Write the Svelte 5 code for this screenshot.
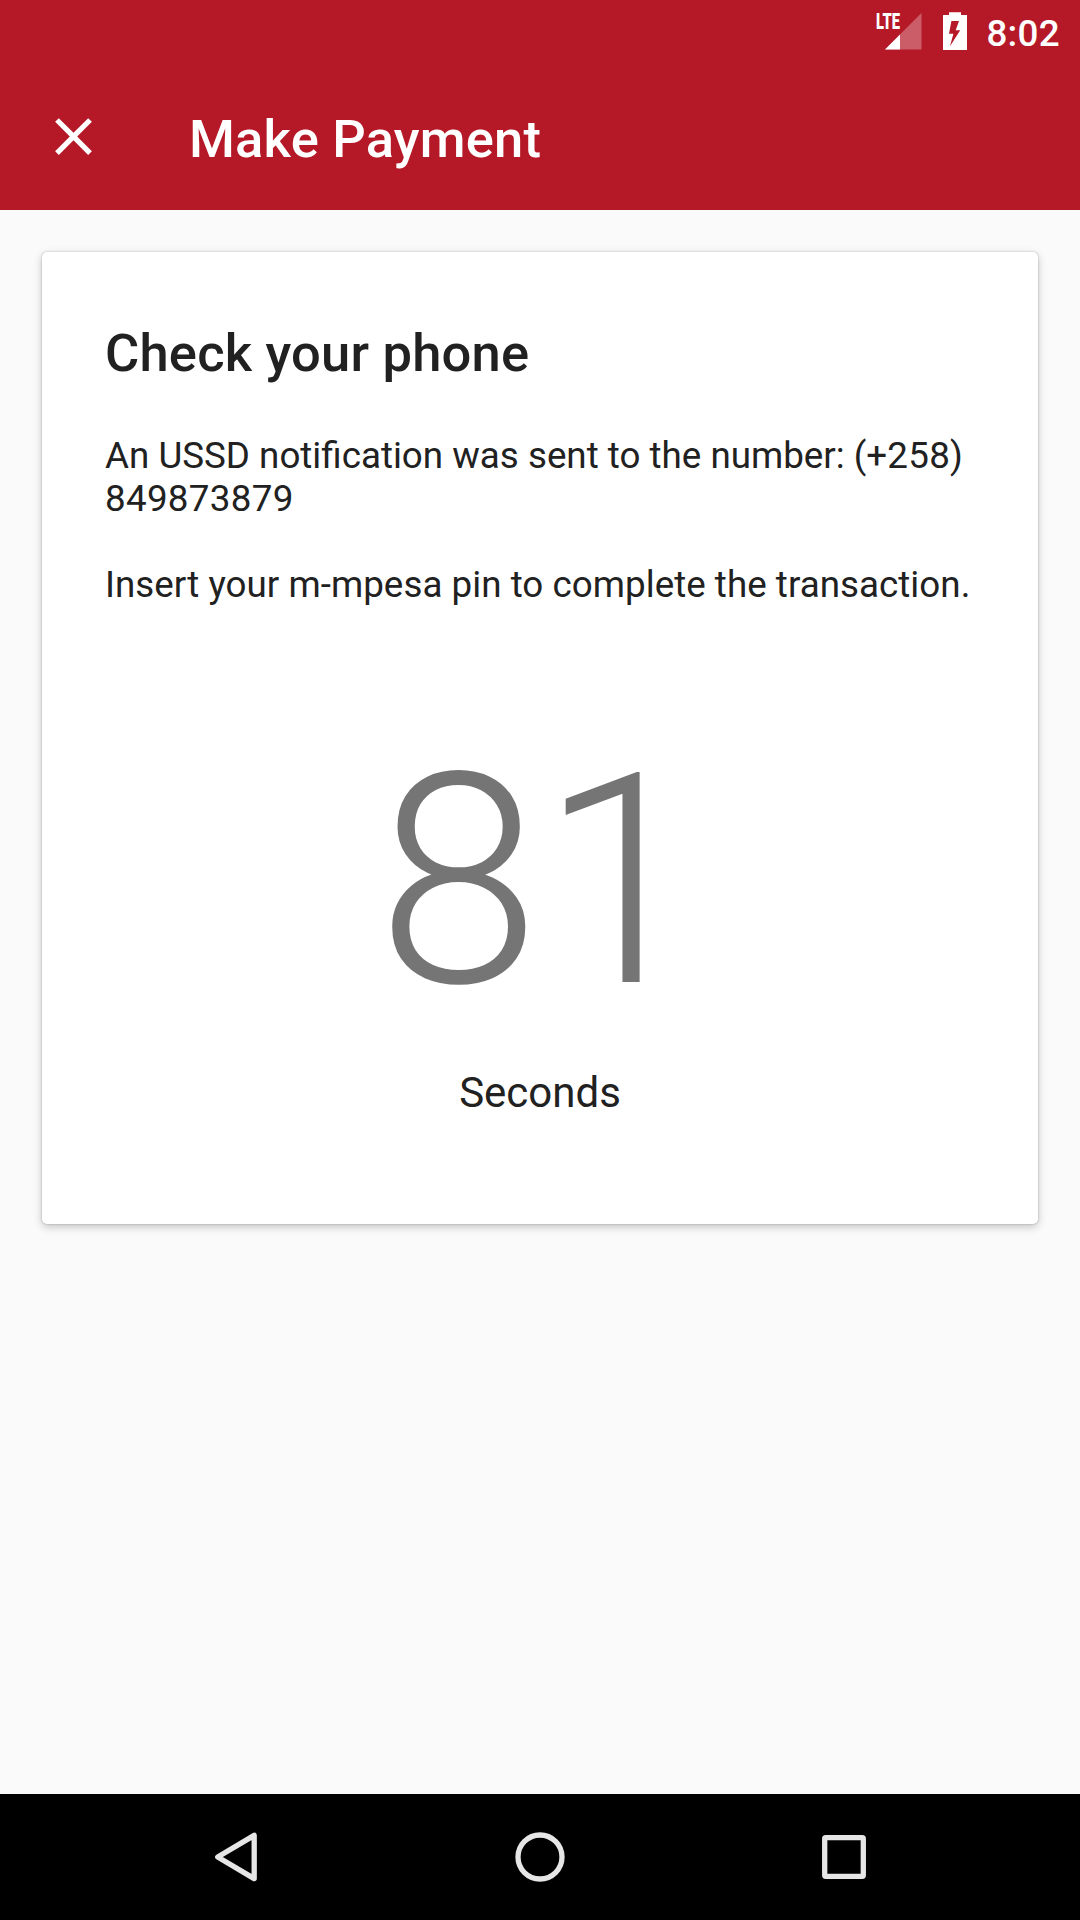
<script>
  const areaCode = '258';
  const phone = '849873879';
  const seconds = 81;
</script>

<div class="screen">
  <header class="top">
    <div class="status">
      <svg class="signal" width="50" height="40" viewBox="-4 0 50 40">
        <text class="lte" x="0" y="18" textLength="24" lengthAdjust="spacingAndGlyphs">LTE</text>
        <path d="M9 38.5 L45.5 2 V38.5 Z" fill="#fff" fill-opacity=".3" />
        <path d="M9 38.5 L24 23.5 V38.5 Z" fill="#fff" />
      </svg>
      <svg class="battery" width="24" height="38" viewBox="0 0 24 38">
        <path
          fill="#fff"
          fill-rule="evenodd"
          d="M6 .3 H18 V3 H24 V38 H0 V3 H6 Z M8.4 9 L6 21.7 H10.4 L7 34.2 L17.2 18.2 H12.7 L16 9 Z"
        />
      </svg>
      <span class="time">8:02</span>
    </div>
    <div class="toolbar">
      <svg class="close" width="63" height="63" viewBox="0 0 24 24">
        <path
          fill="#fff"
          d="M19 6.41L17.59 5 12 10.59 6.41 5 5 6.41 10.59 12 5 17.59 6.41 19 12 13.41 17.59 19 19 17.59 13.41 12z"
        />
      </svg>
      <h1>Make Payment</h1>
    </div>
  </header>

  <main>
    <section class="card">
      <h2>Check your phone</h2>
      <p>An USSD notification was sent to the number: (+<span class="digits">{areaCode}</span>) <span class="digits">{phone}</span></p>
      <p class="hint">Insert your m-mpesa pin to complete the transaction.</p>
      <div class="count">{seconds}</div>
      <div class="unit">Seconds</div>
    </section>
  </main>

  <nav>
    <svg width="64" height="64" viewBox="0 0 64 64">
      <path d="M50.2 10.4 V53.6 L13.7 32 Z" />
    </svg>
    <svg width="64" height="64" viewBox="0 0 64 64">
      <circle cx="32" cy="32" r="22" />
    </svg>
    <svg width="64" height="64" viewBox="0 0 64 64">
      <rect x="12.7" y="12.7" width="38.6" height="38.6" rx="1" />
    </svg>
  </nav>
</div>

<style>
  :global(body) {
    margin: 0;
  }
  .screen {
    width: 1080px;
    height: 1920px;
    display: flex;
    flex-direction: column;
    background: #fafafa;
    color: #212121;
    font-family: Roboto, 'Liberation Sans', sans-serif;
    overflow: hidden;
  }
  .top {
    height: 210px;
    background: #b51827;
    color: #fff;
  }
  .status {
    height: 63px;
    box-sizing: border-box;
    padding: 11px 20px 0 0;
    display: flex;
    justify-content: flex-end;
    align-items: flex-start;
  }
  .signal {
    overflow: visible;
  }
  .lte {
    font-size: 22.5px;
    font-weight: 900;
    fill: #fff;
  }
  .battery {
    margin: 1px 19px 0 21px;
  }
  .time {
    padding-top: 1px;
    font-size: 36.75px;
    line-height: 44px;
    font-weight: 500;
    letter-spacing: 0.3px;
  }
  .toolbar {
    height: 147px;
    box-sizing: border-box;
    padding: 0 42px;
    display: flex;
    align-items: center;
    gap: 84px;
  }
  h1,
  h2 {
    margin: 0;
    font-size: 52.5px;
    line-height: 62px;
    font-weight: 500;
    letter-spacing: 0.2px;
  }
  h1 {
    padding-top: 4px;
  }
  main {
    flex: 1;
    padding: 42px;
  }
  .card {
    height: 972px;
    box-sizing: border-box;
    padding: 70px 63px 0;
    background: #fff;
    border-radius: 5px;
    box-shadow:
      0 0 2px rgba(0, 0, 0, 0.26),
      0 3px 8px rgba(0, 0, 0, 0.22);
  }
  p {
    margin: 50px 0 0;
    font-size: 36.75px;
    line-height: 43px;
  }
  .digits {
    letter-spacing: 0.3px;
  }
  .hint {
    margin-top: 43px;
    white-space: nowrap;
    letter-spacing: 0.03px;
  }
  .count {
    margin-top: 103px;
    font-size: 294px;
    line-height: 345px;
    font-weight: 300;
    color: #757575;
    text-align: center;
  }
  .unit {
    margin-top: 14px;
    font-size: 42px;
    line-height: 50px;
    text-align: center;
  }
  nav {
    height: 126px;
    display: flex;
    justify-content: center;
    align-items: center;
    gap: 240px;
    background: #000;
  }
  nav svg {
    fill: none;
    stroke: #e6e6e6;
    stroke-width: 5.3;
    stroke-linejoin: round;
  }
</style>
